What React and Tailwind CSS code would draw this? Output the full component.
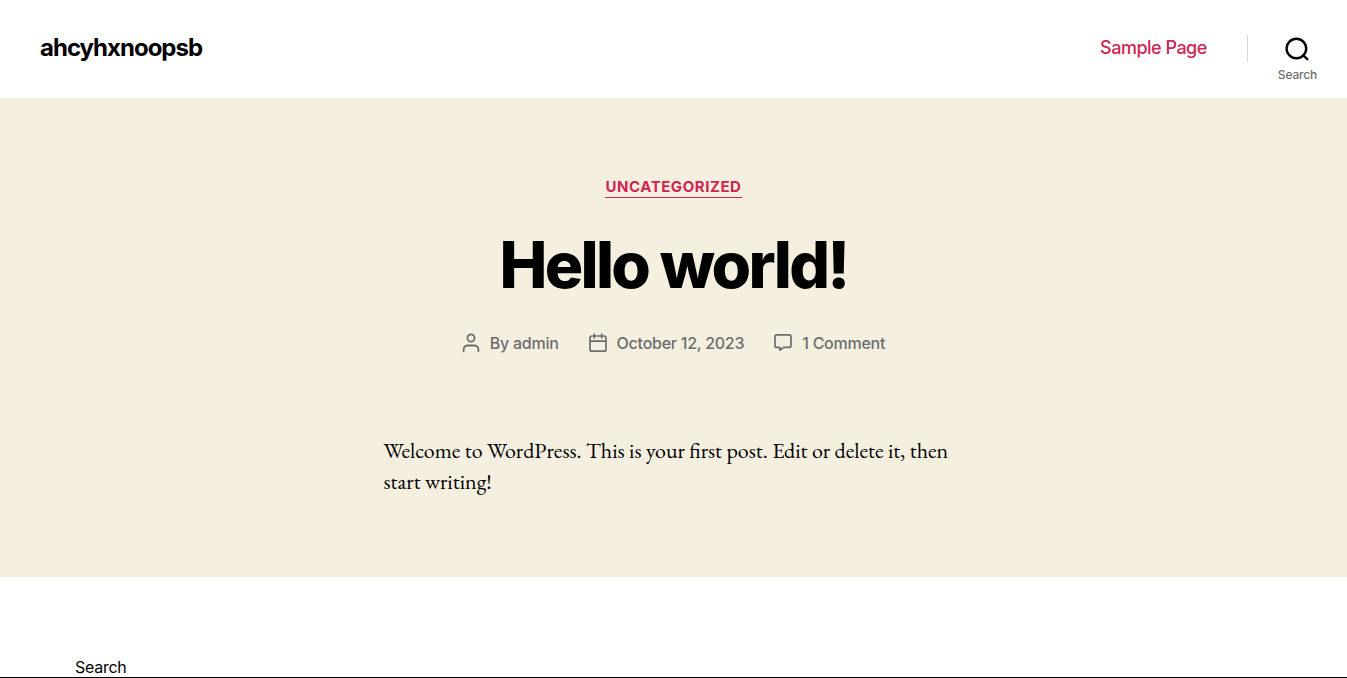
import React from 'react';

const SearchIcon = () => (
  <svg className="w-6 h-6" viewBox="0 0 24 24" fill="none" stroke="currentColor" strokeWidth="2.4" aria-hidden="true">
    <circle cx="11.4" cy="11.5" r="9.8" />
    <path d="M18.4 18.500l4.600 4.400" />
  </svg>
);

const UserIcon = () => (
  <svg className="w-[18px] h-5" viewBox="0 0 18 20" fill="none" stroke="currentColor" strokeWidth="1.8" strokeLinecap="round" aria-hidden="true">
    <circle cx="9" cy="5" r="3.6" />
    <path d="M1.6 18.300v-1.800a4 4 0 0 1 4-4h6.800a4 4 0 0 1 4 4v1.800" />
  </svg>
);

const CalendarIcon = () => (
  <svg className="w-[18px] h-5" viewBox="0 0 18 20" fill="none" stroke="currentColor" strokeWidth="1.7" strokeLinecap="round" aria-hidden="true">
    <rect x="1" y="3" width="16" height="15.2" rx="2" />
    <path d="M1.2 8.2h15.6M5.3 1.2v3.6M12.7 1.2v3.6" />
  </svg>
);

const CommentIcon = () => (
  <svg className="w-[18px] h-5" viewBox="0 0 18 20" fill="none" stroke="currentColor" strokeWidth="1.7" strokeLinejoin="round" aria-hidden="true">
    <path d="M3 1.8h12a2 2 0 0 1 2 2v8.600a2 2 0 0 1-2 2H9.600l-3.800 2.800v-2.800H3a2 2 0 0 1-2-2V3.800a2 2 0 0 1 2-2z" />
  </svg>
);

const postMeta = [
  { icon: UserIcon, text: 'By admin' },
  { icon: CalendarIcon, text: 'October 12, 2023' },
  { icon: CommentIcon, text: '1 Comment' },
];

const Header = () => (
  <header className="flex items-start justify-between bg-white h-[98px] pl-10 pr-[30px] pt-[34px]">
    <a href="#" className="text-2xl leading-7 font-bold tracking-[-0.0415em] text-black">
      ahcyhxnoopsb
    </a>
    <div className="flex items-start">
      <nav>
        <a href="#" className="block text-lg leading-7 font-medium tracking-[-0.0277em] text-[#cd2653]">
          Sample Page
        </a>
      </nav>
      <div className="ml-10 mr-[30px] mt-px h-[27px] w-px bg-[#dcd7ca]" />
      <button type="button" className="flex flex-col items-center pt-[3px] text-black">
        <SearchIcon />
        <span className="mt-1.5 text-xs leading-4 font-medium tracking-[-0.016em] text-[#6d6d6d]">Search</span>
      </button>
    </div>
  </header>
);

const Post = () => (
  <article className="bg-[#f5efe0] px-5 py-20">
    <div className="flex flex-col items-center text-center">
      <a
        href="#"
        className="border-b border-[#cd2653] pb-px text-[15px] leading-[18px] font-bold tracking-[0.0366em] uppercase text-[#cd2653]"
      >
        Uncategorized
      </a>
      <h1 className="mt-8 text-[64px] leading-[69px] font-extrabold tracking-[-0.0415em] text-black">
        Hello world!
      </h1>
      <ul className="mt-8 flex flex-wrap justify-center gap-x-[30px] text-base leading-6 font-medium tracking-[-0.016em] text-[#6d6d6d]">
        {postMeta.map(({ icon: Icon, text }) => (
          <li key={text} className="flex items-center gap-2.5">
            <Icon />
            <a href="#">{text}</a>
          </li>
        ))}
      </ul>
    </div>
    <div className="mx-auto mt-20 max-w-[580px] text-[22px] leading-[31px] text-black font-['EB_Garamond','Liberation_Serif',serif]">
      <p>
        Welcome to WordPress. This is your first post. Edit or delete it, then start writing!
      </p>
    </div>
  </article>
);

const App = () => (
  <div className="flex min-h-screen flex-col border-b border-black bg-white font-['Inter',sans-serif]">
    <Header />
    <main>
      <Post />
    </main>
    <aside className="px-[75px] pt-20">
      <p className="text-base leading-5 tracking-[-0.016em] text-black">Search</p>
    </aside>
  </div>
);

export default App;
